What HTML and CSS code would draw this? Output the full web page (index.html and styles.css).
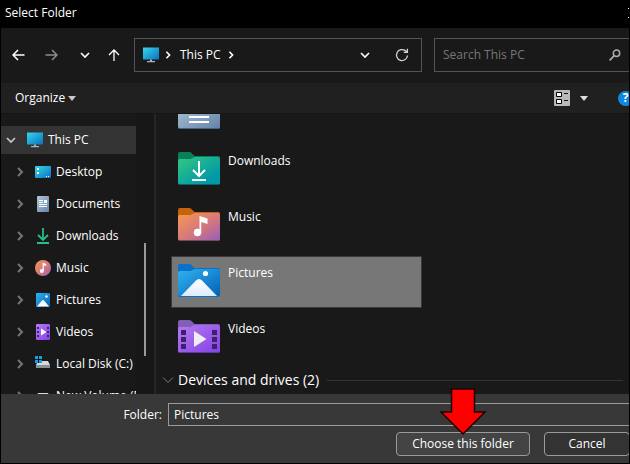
FILE: index.html
```html
<!DOCTYPE html>
<html lang="en">
<head>
<meta charset="utf-8">
<title>Select Folder</title>
<link rel="stylesheet" href="styles.css">
</head>
<body>
<svg class="defs" aria-hidden="true">
  <defs>
    <linearGradient id="g-screen" x1="0" y1="0" x2="1" y2="1"><stop offset="0" stop-color="#35d8ea"/><stop offset="1" stop-color="#0b6fc2"/></linearGradient>
    <linearGradient id="g-doc" x1="0" y1="0" x2="1" y2="1"><stop offset="0" stop-color="#b3c6dc"/><stop offset="1" stop-color="#6285a6"/></linearGradient>
    <linearGradient id="g-down" x1="0" y1="0" x2="1" y2="1"><stop offset="0" stop-color="#34c880"/><stop offset=".8" stop-color="#0099a8"/></linearGradient>
    <linearGradient id="g-music" x1="0" y1="0" x2="1" y2="1"><stop offset="0" stop-color="#fb974f"/><stop offset=".6" stop-color="#d07583"/><stop offset="1" stop-color="#955fb8"/></linearGradient>
    <linearGradient id="g-pic" x1="0" y1="0" x2="1" y2="1"><stop offset="0" stop-color="#2fb4f0"/><stop offset="1" stop-color="#0560b8"/></linearGradient>
    <linearGradient id="g-vid" x1="0" y1="0" x2="1" y2="1"><stop offset="0" stop-color="#b67af2"/><stop offset="1" stop-color="#8442e4"/></linearGradient>
    <linearGradient id="g-white" x1="0" y1="0" x2="0" y2="1"><stop offset="0" stop-color="#ffffff"/><stop offset="1" stop-color="#dcebfa"/></linearGradient>
    <symbol id="i-pc" viewBox="0 0 16 16"><path fill="url(#g-screen)" d="M0 0.500h16v12H0z"/><path fill="#a9b4bd" d="M7 12.500h2v1.500h3v1.200H4V14h3z"/></symbol>
    <symbol id="i-right" viewBox="0 0 8 10"><path fill="none" stroke="currentColor" stroke-width="2" d="M2 1l4 4-4 4"/></symbol>
    <symbol id="i-down" viewBox="0 0 10 8"><path fill="none" stroke="currentColor" stroke-width="1.600" d="M1 2l4 4 4-4"/></symbol>
    <symbol id="i-folder" viewBox="0 0 42 33"><path d="M0 2q0-2 2-2h9q1.500 0 2.500 1l3 3H40q2 0 2 2v25q0 2-2 2H2q-2 0-2-2z"/></symbol>
    <symbol id="i-front" viewBox="0 0 42 33"><path d="M0 9q0-2 2-2h10q1.500 0 2.500-1l1-.6q.8-.4 2-.4H40q2 0 2 2v23.500q0 1.500-2 1.500H2q-2 0-2-1.500z"/></symbol>
  </defs>
</svg>
<main class="dialog">
  <header class="title"><h1>Select Folder</h1>
    <button class="close" aria-label="Close"><svg viewBox="0 0 10 10" width="10" height="10"><path stroke="#fff" d="M0 0l10 10M10 0L0 10"/></svg></button>
  </header>

  <nav class="nav" aria-label="Navigation">
    <div class="history">
      <button aria-label="Back"><svg width="13" height="12" viewBox="0 0 13 12"><path fill="none" stroke="#fff" stroke-width="1.500" d="M12.500 6H1M6 1L1 6l5 5"/></svg></button>
      <button aria-label="Forward"><svg width="13" height="12" viewBox="0 0 13 12"><path fill="none" stroke="#8c8c8c" stroke-width="1.500" d="M.5 6H12M7 1l5 5-5 5"/></svg></button>
      <button class="recent" aria-label="Recent locations"><svg width="10" height="8"><use href="#i-down"/></svg></button>
      <button class="up" aria-label="Up"><svg width="12" height="12" viewBox="0 0 12 12"><path fill="none" stroke="#fff" stroke-width="1.300" d="M6 12V1M1 6l5-5 5 5"/></svg></button>
    </div>
    <div class="address">
      <svg width="16" height="16"><use href="#i-pc"/></svg>
      <svg class="crumb" width="8" height="8"><use href="#i-right"/></svg>
      <a href="#pc">This PC</a>
      <svg width="8" height="8"><use href="#i-right"/></svg>
      <button class="drop" aria-label="Previous locations"><svg width="10" height="8"><use href="#i-down"/></svg></button>
      <button aria-label="Refresh"><svg width="14" height="14" viewBox="0 0 14 14"><path fill="none" stroke="#d4d4d4" stroke-width="1.300" d="M12.500 7.500A5.500 5.500 0 1 1 10.500 2.800L12 4.200M12.400.8v3.500H8.800"/></svg></button>
    </div>
    <label class="search"><input type="search" placeholder="Search This PC" aria-label="Search This PC">
      <svg width="12" height="12" viewBox="0 0 12 12"><circle cx="7.500" cy="4.200" r="3.200" fill="none" stroke="#aaa" stroke-width="1.500"/><path stroke="#aaa" stroke-width="1.800" d="M5.200 6.700L.6 11.400"/></svg>
    </label>
  </nav>

  <div class="toolbar">
    <button class="organize">Organize <svg width="8" height="5" viewBox="0 0 8 5"><path fill="#c8c8c8" d="M0 0h8L4 5z"/></svg></button>
    <button class="view" aria-label="Change your view"><svg width="16" height="16" viewBox="0 0 16 16"><rect width="16" height="16" rx="1" fill="#b9b9b9"/><path fill="#fff" stroke="#000" d="M2.500 2.500h5v4h-5zM2.500 9.500h5v4h-5z"/><path stroke="#111" d="M10 3.500h4M10 10.500h4"/></svg><svg width="8" height="5" viewBox="0 0 8 5"><path fill="#ddd" d="M0 0h8L4 5z"/></svg></button>
    <button class="help" aria-label="Help">?</button>
  </div>

  <div class="body">
    <aside class="side">
      <ul class="tree">
        <li class="root"><svg class="arrow" width="10" height="8"><use href="#i-down"/></svg><svg width="16" height="16"><use href="#i-pc"/></svg><span>This PC</span></li>
        <li><svg class="arrow" width="8" height="10"><use href="#i-right"/></svg><svg width="16" height="16" viewBox="0 0 16 16"><rect y="2" width="16" height="12" rx="1" fill="url(#g-screen)"/><path fill="#fff" d="M2 4h2v2H2zM2 8h2v2H2zM11 12h1v1h-1zM13 12h1v1h-1z"/></svg><span>Desktop</span></li>
        <li><svg class="arrow" width="8" height="10"><use href="#i-right"/></svg><svg width="16" height="16" viewBox="0 0 16 16"><rect x="2" width="12" height="16" rx="1" fill="url(#g-doc)"/><path stroke="#fff" d="M4 4.500h4M4 6.500h4M4 8.500h8M4 10.500h8"/><path fill="#fff" d="M9 4h3v3H9z"/></svg><span>Documents</span></li>
        <li><svg class="arrow" width="8" height="10"><use href="#i-right"/></svg><svg width="16" height="16" viewBox="0 0 16 16"><path fill="none" stroke="#24bd8d" stroke-width="1.800" d="M8 0v12M3 7l5 5 5-5"/><path fill="#24bd8d" d="M2 14h12v2H2z"/></svg><span>Downloads</span></li>
        <li><svg class="arrow" width="8" height="10"><use href="#i-right"/></svg><svg width="16" height="16" viewBox="0 0 16 16"><circle cx="8" cy="8" r="8" fill="url(#g-music)"/><circle cx="6.800" cy="11" r="2" fill="#fff"/><path fill="#fff" d="M7.600 3h1l2.600 1v2L8.800 5.300V11H7.600z"/></svg><span>Music</span></li>
        <li><svg class="arrow" width="8" height="10"><use href="#i-right"/></svg><svg width="16" height="16" viewBox="0 0 16 16"><rect x="1" y="1" width="14" height="14" rx="1" fill="url(#g-pic)"/><circle cx="11.500" cy="4.500" r="1.200" fill="#fff"/><path fill="#fff" d="M2 14.500l5-6q1-1 2 0l5 6z"/></svg><span>Pictures</span></li>
        <li><svg class="arrow" width="8" height="10"><use href="#i-right"/></svg><svg width="16" height="16" viewBox="0 0 16 16"><rect x="1" width="14" height="16" rx="1" fill="url(#g-vid)"/><path fill="#40217a" d="M2 3h2v2H2zM2 7h2v2H2zM2 11h2v2H2zM12 3h2v2h-2zM12 7h2v2h-2zM12 11h2v2h-2z"/><path fill="#fff" d="M6 4.500L11.500 8 6 11.500z"/></svg><span>Videos</span></li>
        <li><svg class="arrow" width="8" height="10"><use href="#i-right"/></svg><svg width="16" height="16" viewBox="0 0 16 16"><path fill="#d8d8d8" d="M4 5h9l2 4H1l1-2h2z"/><path fill="#8b9095" d="M1 9h14v3H1z"/><path fill="#24d060" d="M3 10h2v1H3z"/><path fill="#1b9de8" d="M0 0h3v3H0zM4 0h3v3H4zM0 4h3v3H0zM4 4h3v3H4z"/></svg><span>Local Disk (C:)</span></li>
        <li><svg class="arrow" width="8" height="10"><use href="#i-right"/></svg><svg width="16" height="16" viewBox="0 0 16 16"><path fill="#d8d8d8" d="M3 5h10l2 4H1z"/><path fill="#8b9095" d="M1 9h14v3H1z"/></svg><span>New Volume (E:)</span></li>
      </ul>
      <div class="track"><div class="thumb"></div></div>
    </aside>

    <section class="files">
      <ul class="items">
        <li><svg width="42" height="33" viewBox="0 0 42 33"><use href="#i-folder" fill="#5e7f9d"/><use href="#i-front" fill="url(#g-doc)"/><path stroke="#fff" stroke-width="2" d="M11 15h20M11 21h20M11 26h20"/><path stroke="#48637d" d="M1 32.500h40"/></svg><span>Documents</span></li>
        <li><svg width="42" height="33" viewBox="0 0 42 33"><use href="#i-folder" fill="#088059"/><use href="#i-front" fill="url(#g-down)"/><path fill="none" stroke="#fff" stroke-width="2" d="M21 9v15M15 18l6 6 6-6M14 28h14"/><path stroke="#07656d" d="M1 32.500h40"/></svg><span>Downloads</span></li>
        <li><svg width="42" height="33" viewBox="0 0 42 33"><use href="#i-folder" fill="#c4620d"/><use href="#i-front" fill="url(#g-music)"/><circle cx="19.500" cy="24.500" r="3.700" fill="#fff"/><path fill="#fff" d="M21.500 8l8 2.500v5.500l-6.300-2V25h-1.700z"/><path stroke="#754867" d="M1 32.500h40"/></svg><span>Music</span></li>
        <li class="selected"><svg width="42" height="33" viewBox="0 0 42 33"><use href="#i-folder" fill="#0871cb"/><use href="#i-front" fill="url(#g-pic)"/><circle cx="27.500" cy="9.500" r="2.600" fill="#fff"/><path fill="url(#g-white)" d="M3 32l15-15.500q3-3 6 0L39 32z"/></svg><span>Pictures</span></li>
        <li><svg width="42" height="33" viewBox="0 0 42 33"><use href="#i-folder" fill="#8060b4"/><use href="#i-front" fill="url(#g-vid)"/><path fill="#3d216d" d="M3 10h5v5H3zM3 17h5v5H3zM3 24h5v5H3zM34 10h5v5h-5zM34 17h5v5h-5zM34 24h5v5h-5z"/><path fill="#eee" d="M16 11l12.500 8L16 27z"/><path stroke="#6435aa" d="M1 32.500h40"/></svg><span>Videos</span></li>
      </ul>
      <h2 class="group"><svg width="12" height="8" viewBox="0 0 12 8"><path fill="none" stroke="#7a7a7a" d="M1 1.500l5 5 5-5"/></svg>Devices and drives (2)</h2>
    </section>
  </div>

  <footer class="footer">
    <div class="field"><label for="folder">Folder:</label><input id="folder" type="text" value="Pictures"></div>
    <div class="actions">
      <div class="choose"><button class="btn primary">Choose this folder</button>
        <svg class="pointer" width="48" height="48" viewBox="0 0 48 48" aria-hidden="true"><path fill="#f00" stroke="#200" stroke-width="1.500" d="M12.500 1h23v23H46L24 46 2 24h10.500z"/></svg>
      </div>
      <button class="btn cancel">Cancel</button>
    </div>
  </footer>
</main>
</body>
</html>
```
FILE: styles.css
```css
* { box-sizing: border-box; }
body {
  margin: 0;
  background: #000;
  color: #fff;
  font: 12px/16px "Open Sans", "Noto Sans", sans-serif;
}
button, input { font: inherit; color: inherit; }
button { display: flex; align-items: center; padding: 0; border: 0; background: none; }
ul { list-style: none; margin: 0; padding: 0; }
svg { display: block; flex: none; }
.defs { position: absolute; width: 0; height: 0; }

.dialog {
  display: grid;
  grid-template-rows: 28px 55px 30px minmax(0, 1fr) auto;
  height: 100vh;
  overflow: hidden;
  border: solid #000;
  border-width: 0 1px 1px 0;
  padding-left: 1px;
}
.title { display: flex; align-items: center; justify-content: space-between; padding: 0 0 2px 4px; margin-right: -9px; }
.title h1 { margin: 0; font-size: 12px; font-weight: 400; }

.nav { display: flex; align-items: center; background: #191919; margin-right: -12px; padding-bottom: 1px; }
.history { display: flex; align-items: center; gap: 20px; width: 133px; padding-left: 11px; }
.history button + button { min-width: 13px; justify-content: center; }
.history .recent { margin-right: -4px; }
.address { display: flex; flex: 1; align-items: center; height: 34px; padding: 0 12px 0 8px; border: 1px solid #535353; }
.address a { color: inherit; text-decoration: none; margin: 0 6px 0 8px; }
.address .crumb { margin-left: 5px; }
.address .drop { margin: 0 25px 0 auto; }
.search { display: flex; align-items: center; width: 207px; height: 34px; margin-left: 12px; padding: 0 19px 0 8px; border: 1px solid #535353; }
.search input { flex: 1; min-width: 0; padding: 0; border: 0; background: none; outline: 0; }
.search input::placeholder { color: #777; opacity: 1; }

.toolbar { display: flex; align-items: center; background: #202020; padding-left: 14px; margin-right: -4px; }
.organize { gap: 3px; }
.view { gap: 10px; margin-left: auto; }
.help { justify-content: center; width: 15px; height: 15px; margin-left: 30px; border-radius: 50%; background: #1087de; font-weight: 700; }

.body { display: grid; grid-template-columns: 155px minmax(0, 1fr); background: #191919; border-top: 1px solid #141414; min-height: 0; overflow: hidden; }
.side { display: flex; min-height: 0; overflow: hidden; border-right: 2px solid #262626; background: #171717; }
.tree { flex: 1; padding-top: 10px; background: #191919; overflow: hidden; }
.tree li { display: flex; align-items: center; height: 32px; padding-left: 15px; white-space: nowrap; }
.tree li svg + svg { margin: 0 5px 0 11px; }
.tree .arrow { color: #767676; }
.tree .root { height: 28px; margin: 2px 0; padding-left: 5px; background: #333; }
.tree .root .arrow { color: #ccc; }
.track { width: 18px; padding: 129px 0 0 8px; }
.thumb { width: 2px; height: 113px; background: #9a9a9a; }

.files { overflow: hidden; padding: 0 6px; }
.items { display: grid; gap: 6px; width: 249px; margin: -25px 0 0 10px; }
.items li { display: flex; gap: 8px; height: 50px; padding: 7px 6px; }
.items span { padding-top: 1px; }
.items .selected { background: #777; outline: 1px solid #3a3a3a; }
.group { display: flex; align-items: center; gap: 4px; margin: 5px 0 0; font-size: 14px; line-height: 24px; font-weight: 400; }
.group::after { content: ""; flex: 1; height: 1px; margin-left: 4px; background: #333; }

.footer { background: #383838; padding: 9px 0 7px; }
.field { display: flex; align-items: center; margin-right: -4px; }
.field label { width: 167px; padding-right: 6px; text-align: right; }
.field input { flex: 1; min-width: 0; height: 23px; padding: 0 5px; border: 1px solid #9b9b9b; background: #383838; outline: 0; }
.actions { display: flex; justify-content: flex-end; gap: 14px; margin: 6px -1px 0 0; }
.choose { position: relative; }
.btn { justify-content: center; height: 24px; border: 1px solid #9b9b9b; border-radius: 4px; background: #333; }
.primary { width: 134px; background: #444; }
.cancel { width: 86px; }
.pointer { position: absolute; left: 43px; bottom: 20px; }
```
